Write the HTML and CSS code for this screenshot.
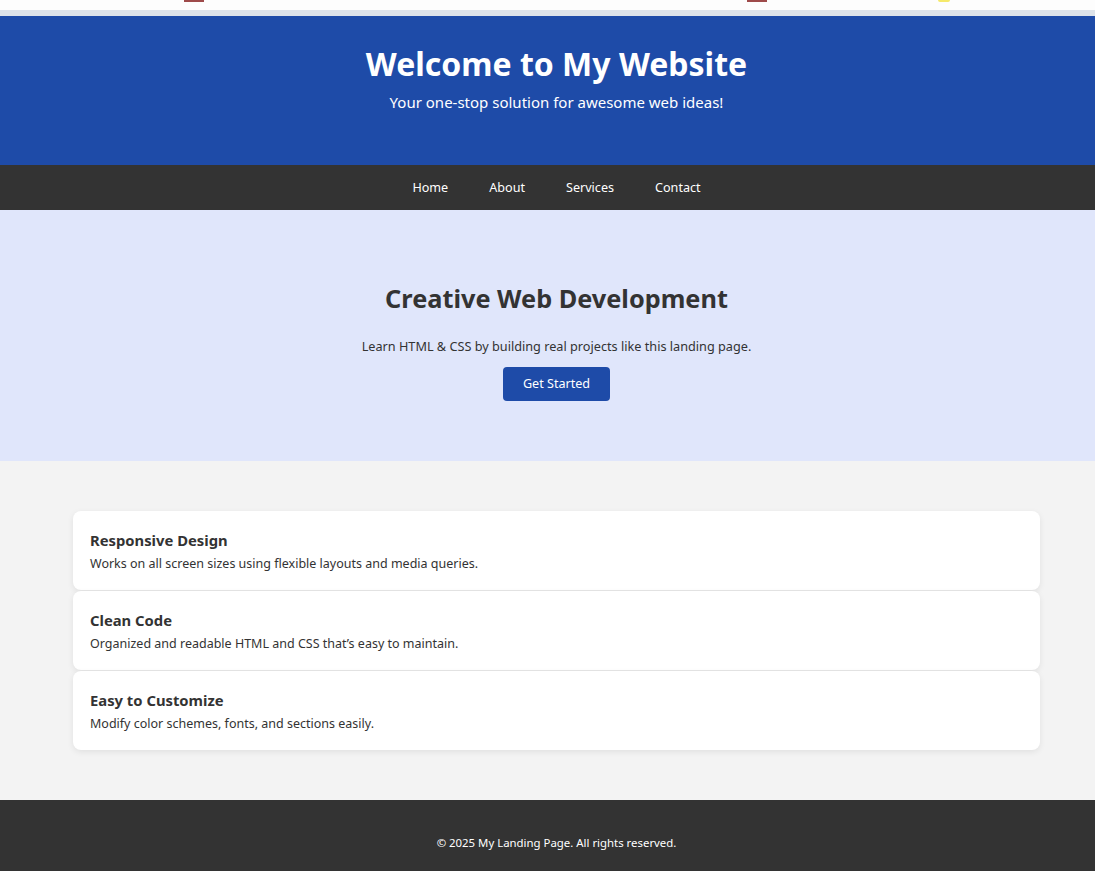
FILE: index.html
```html
<!DOCTYPE html>
<html lang="en">
<head>
<meta charset="utf-8">
<title>My Landing Page</title>
<link rel="stylesheet" href="styles.css">
</head>
<body>
<div class="topstrip">
  <span class="mark mark-a"></span>
  <span class="mark mark-b"></span>
  <span class="mark mark-c"></span>
</div>
<div class="topbar"></div>
<header class="site-header">
  <h1>Welcome to My Website</h1>
  <p>Your one-stop solution for awesome web ideas!</p>
</header>
<nav class="site-nav">
  <a href="#">Home</a>
  <a href="#">About</a>
  <a href="#">Services</a>
  <a href="#">Contact</a>
</nav>
<section class="hero">
  <h2>Creative Web Development</h2>
  <p>Learn HTML &amp; CSS by building real projects like this landing page.</p>
  <a class="btn" href="#">Get Started</a>
</section>
<section class="features">
  <div class="card">
    <h3>Responsive Design</h3>
    <p>Works on all screen sizes using flexible layouts and media queries.</p>
  </div>
  <div class="card">
    <h3>Clean Code</h3>
    <p>Organized and readable HTML and CSS that’s easy to maintain.</p>
  </div>
  <div class="card">
    <h3>Easy to Customize</h3>
    <p>Modify color schemes, fonts, and sections easily.</p>
  </div>
</section>
<footer class="site-footer">
  <p>© 2025 My Landing Page. All rights reserved.</p>
</footer>
</body>
</html>
```
FILE: styles.css
```css
* { box-sizing: border-box; }
html { overflow-x: hidden; }
html, body { margin: 0; padding: 0; }
body {
  width: 1113px;
  font-family: "Noto Sans", "Open Sans", sans-serif;
  color: #333;
  background: #f3f3f3;
}
.topstrip {
  position: relative;
  height: 10px;
  background: #fdfdfd;
}
.mark {
  position: absolute;
  top: 0;
  height: 2px;
}
.mark-a { left: 184px; width: 20px; background: #9e4a4a; }
.mark-b { left: 747px; width: 20px; background: #9e4a4a; }
.mark-c { left: 938px; width: 12px; height: 2px; background: #f5e96a; border-radius: 0 0 6px 6px; }
.topbar {
  height: 6px;
  background: #dde3ea;
}
.site-header {
  background: #1e4ba8;
  color: #fff;
  text-align: center;
  height: 149px;
  padding-top: 27px;
}
.site-header h1 {
  margin: 0;
  font-size: 32px;
  font-weight: 700;
  line-height: 42px;
}
.site-header p {
  margin: 4px 0 0;
  font-size: 15px;
  line-height: 26px;
}
.site-nav {
  background: #333;
  height: 45px;
  display: flex;
  justify-content: center;
  align-items: center;
  gap: 41px;
}
.site-nav a {
  color: #fff;
  text-decoration: none;
  font-size: 12.6px;
}
.hero {
  background: #e0e6fb;
  text-align: center;
  height: 251px;
  padding-top: 70px;
}
.hero h2 {
  margin: 0;
  font-size: 25.3px;
  line-height: 36px;
  font-weight: 700;
}
.hero p {
  margin: 20px 0 0;
  font-size: 12.7px;
  line-height: 20px;
}
.btn {
  display: inline-block;
  margin-top: 11px;
  background: #1e4ba8;
  color: #fff;
  text-decoration: none;
  font-size: 12.6px;
  width: 107px;
  height: 34px;
  line-height: 34px;
  border-radius: 4px;
}
.features {
  padding: 50px 73px;
  display: flex;
  flex-direction: column;
  gap: 1px;
}
.card {
  background: #fff;
  border-radius: 8px;
  box-shadow: 0 2px 6px rgba(0,0,0,0.08);
  height: 79px;
  padding: 18px 17px;
}
.card h3 {
  margin: 0;
  font-size: 14.8px;
  line-height: 22px;
  font-weight: 700;
}
.card p {
  margin: 3px 0 0;
  font-size: 12.5px;
  line-height: 20px;
}
.site-footer {
  background: #333;
  color: #fff;
  text-align: center;
  height: 71px;
  padding-top: 34px;
}
.site-footer p {
  margin: 0;
  font-size: 11.4px;
  line-height: 18px;
}
```
